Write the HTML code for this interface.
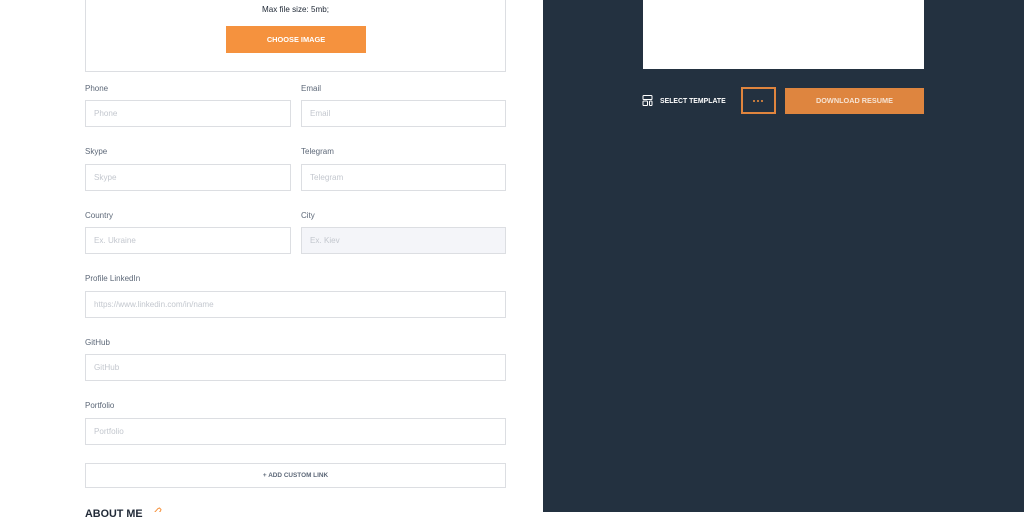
<!DOCTYPE html>
<html>
<head>
<meta charset="utf-8">
<style>
html,body{margin:0;padding:0;width:1024px;height:512px;overflow:hidden;background:#fff;font-family:"Liberation Sans",sans-serif}
.a{position:absolute}
.l{position:absolute;font-size:8px;line-height:12px;color:#5d6878;white-space:nowrap}
.i{position:absolute;box-sizing:border-box;height:27px;border:1px solid #dcdee2;background:#fff;font-size:8.1px;line-height:26px;padding-left:8px;color:#c3c7ce;white-space:nowrap}
</style>
</head>
<body>
<div class="a" style="left:85px;top:-10px;width:421px;height:82px;box-sizing:border-box;border:1px solid #dcdee2"></div>
<div class="a" style="left:85px;top:3px;width:421px;text-align:center;font-size:8.1px;line-height:13px;color:#222b38">Max file size: 5mb;</div>
<div class="a" style="left:226px;top:26px;width:140px;height:27px;background:#f5923e;color:#fff;font-size:7.4px;font-weight:bold;line-height:27px;text-align:center">CHOOSE IMAGE</div>

<div class="l" style="left:85px;top:83px">Phone</div>
<div class="i" style="left:85px;top:100px;width:206px">Phone</div>
<div class="l" style="left:301px;top:83px">Email</div>
<div class="i" style="left:301px;top:100px;width:205px">Email</div>

<div class="l" style="left:85px;top:146px">Skype</div>
<div class="i" style="left:85px;top:164px;width:206px">Skype</div>
<div class="l" style="left:301px;top:146px">Telegram</div>
<div class="i" style="left:301px;top:164px;width:205px">Telegram</div>

<div class="l" style="left:85px;top:210px">Country</div>
<div class="i" style="left:85px;top:227px;width:206px">Ex. Ukraine</div>
<div class="l" style="left:301px;top:210px">City</div>
<div class="i" style="left:301px;top:227px;width:205px;background:#f4f5f9">Ex. Kiev</div>

<div class="l" style="left:85px;top:273px">Profile LinkedIn</div>
<div class="i" style="left:85px;top:291px;width:421px">https://www.linkedin.com/in/name</div>

<div class="l" style="left:85px;top:337px">GitHub</div>
<div class="i" style="left:85px;top:354px;width:421px">GitHub</div>

<div class="l" style="left:85px;top:400px">Portfolio</div>
<div class="i" style="left:85px;top:418px;width:421px">Portfolio</div>

<div class="a" style="left:85px;top:463px;width:421px;height:25px;box-sizing:border-box;border:1px solid #dcdee2;text-align:center;font-size:6.4px;font-weight:bold;line-height:24px;color:#5d6878">+ ADD CUSTOM LINK</div>

<div class="a" style="left:85px;top:507px;font-size:10.8px;font-weight:bold;line-height:14px;color:#222b38;white-space:nowrap">ABOUT ME</div>
<svg class="a" style="left:152px;top:507px" width="10" height="5" viewBox="0 0 10 5"><path d="M2 6 L6 1.5 L7.5 1 L9 2.5 L8.5 4 L5 8" fill="none" stroke="#f5923e" stroke-width="1"/></svg>

<div class="a" style="left:543px;top:0;width:481px;height:512px;background:#233140"></div>
<div class="a" style="left:643px;top:0;width:281px;height:69px;background:#fff"></div>

<svg class="a" style="left:642px;top:95px" width="11" height="11" viewBox="0 0 11 11"><g fill="none" stroke="#fff" stroke-width="1"><rect x="1" y="0.5" width="9" height="4" rx="0.8"/><rect x="1" y="6" width="4.5" height="4.5" rx="0.8"/><rect x="7.5" y="6" width="2.5" height="4.5" rx="0.8"/></g></svg>
<div class="a" style="left:660px;top:95px;font-size:6.9px;font-weight:bold;line-height:13px;color:#fff;white-space:nowrap">SELECT TEMPLATE</div>

<div class="a" style="left:741px;top:87px;width:35px;height:27px;box-sizing:border-box;border:2px solid #e0853e"></div>
<div class="a" style="left:753px;top:100px;width:2px;height:2px;background:#f5923e;border-radius:50%"></div>
<div class="a" style="left:757px;top:100px;width:2px;height:2px;background:#f5923e;border-radius:50%"></div>
<div class="a" style="left:761px;top:100px;width:2px;height:2px;background:#f5923e;border-radius:50%"></div>

<div class="a" style="left:785px;top:88px;width:139px;height:26px;background:#de853f;color:#f6e3d3;font-size:7.3px;font-weight:bold;line-height:26px;text-align:center">DOWNLOAD RESUME</div>
</body>
</html>
